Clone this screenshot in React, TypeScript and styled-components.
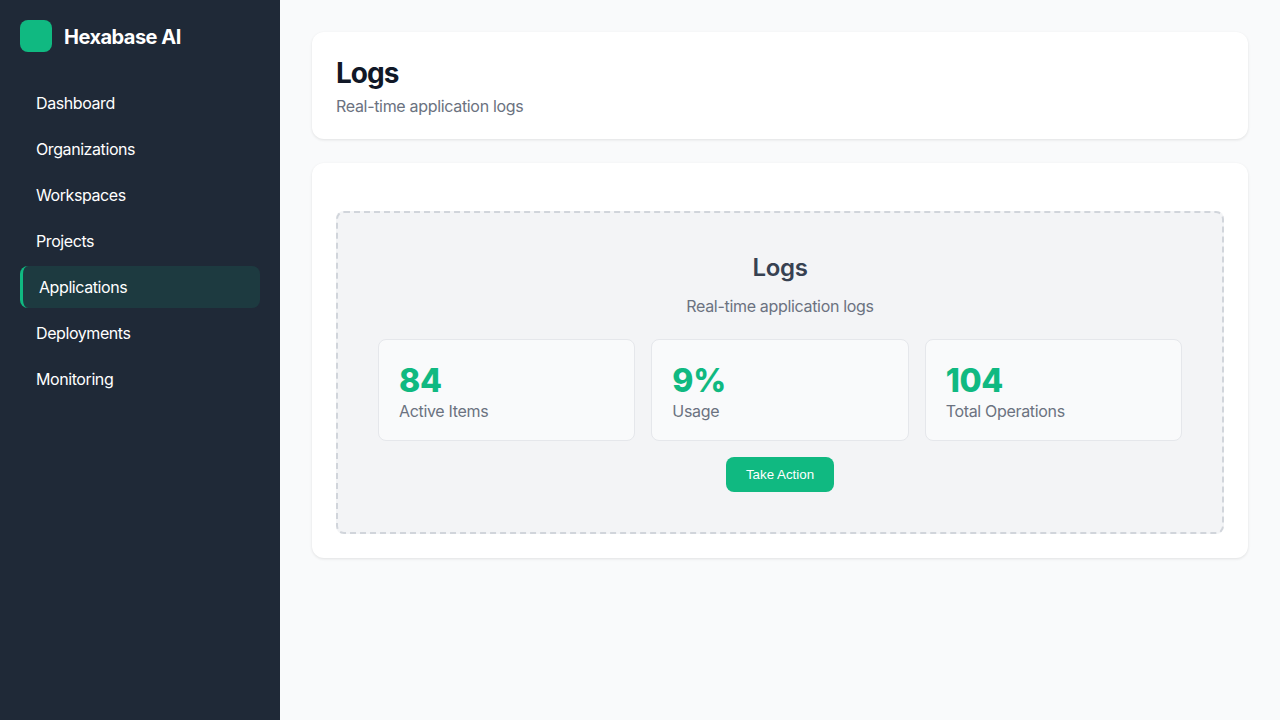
import React from 'react';
import styled, {createGlobalStyle} from 'styled-components';

const navItems = ['Dashboard', 'Organizations', 'Workspaces', 'Projects', 'Applications', 'Deployments', 'Monitoring'];

const stats = [
    {value: '84', label: 'Active Items'},
    {value: '9%', label: 'Usage'},
    {value: '104', label: 'Total Operations'},
];

const App = () => {
    return (
        <Layout>
            <GlobalStyle/>
            <Sidebar>
                <Brand>
                    <BrandMark/>
                    <BrandName>{'Hexabase AI'}</BrandName>
                </Brand>
                <Nav>
                    {navItems.map((item) => (
                        <NavItem
                            key={item}
                            $active={item === 'Applications'}
                        >
                            {item}
                        </NavItem>
                    ))}
                </Nav>
            </Sidebar>
            <Main>
                <Card>
                    <PageTitle>{'Logs'}</PageTitle>
                    <PageSubtitle>{'Real-time application logs'}</PageSubtitle>
                </Card>
                <ContentCard>
                    <Placeholder>
                        <PlaceholderTitle>{'Logs'}</PlaceholderTitle>
                        <PlaceholderText>{'Real-time application logs'}</PlaceholderText>
                        <StatGrid>
                            {stats.map((stat) => (
                                <StatCard key={stat.label}>
                                    <StatValue>{stat.value}</StatValue>
                                    <StatLabel>{stat.label}</StatLabel>
                                </StatCard>
                            ))}
                        </StatGrid>
                        <ActionButton>{'Take Action'}</ActionButton>
                    </Placeholder>
                </ContentCard>
            </Main>
        </Layout>
    );
};

const GlobalStyle = createGlobalStyle`
    * {
        box-sizing: border-box;
    }

    body {
        margin: 0;
        font-family: Inter, "Liberation Sans", sans-serif;
        letter-spacing: -0.02em;
        background: #f9fafb;
    }
`;

const Layout = styled.div`
    display: flex;
    height: 720px;
    overflow: hidden;
`;

const Sidebar = styled.aside`
    flex: 0 0 280px;
    padding: 20px;
    background: #1f2937;
    color: #fff;
`;

const Brand = styled.div`
    display: flex;
    align-items: center;
    gap: 12px;
    margin-bottom: 30px;
`;

const BrandMark = styled.div`
    width: 32px;
    height: 32px;
    border-radius: 8px;
    background: #10b981;
`;

const BrandName = styled.div`
    padding-top: 2px;
    font-size: 20px;
    font-weight: 700;
    letter-spacing: -0.026em;
`;

const Nav = styled.nav`
    display: flex;
    flex-direction: column;
    gap: 4px;
`;

const NavItem = styled.div<{$active: boolean}>`
    height: 42px;
    display: flex;
    align-items: center;
    padding: 0 16px;
    border-radius: 8px;
    font-size: 16px;
    font-weight: 420;
    letter-spacing: -0.026em;
    color: #fff;
    background: ${({$active}) => ($active ? 'rgba(16, 185, 129, 0.12)' : 'transparent')};
    border-left: ${({$active}) => ($active ? '3px solid #10b981' : '0')};
`;

const Main = styled.main`
    flex: 1;
    display: flex;
    flex-direction: column;
    gap: 24px;
    padding: 32px;
`;

const Card = styled.section`
    padding: 24px;
    border-radius: 12px;
    background: #fff;
    box-shadow: 0 1px 3px rgba(0, 0, 0, 0.1);
`;

const ContentCard = styled(Card)`
    padding-top: 48px;
`;

const PageTitle = styled.h1`
    margin: 0 0 8px;
    font-size: 28px;
    line-height: 34px;
    font-weight: 700;
    letter-spacing: -0.035em;
    color: #111827;
`;

const PageSubtitle = styled.p`
    margin: 0;
    font-size: 16px;
    line-height: 17px;
    color: #6b7280;
`;

const Placeholder = styled.div`
    display: flex;
    flex-direction: column;
    align-items: center;
    padding: 40px;
    border: 2px dashed #d1d5db;
    border-radius: 8px;
    background: #f3f4f6;
`;

const PlaceholderTitle = styled.h2`
    margin: 0 0 16px;
    font-size: 24px;
    line-height: 29px;
    font-weight: 600;
    color: #374151;
`;

const PlaceholderText = styled.p`
    margin: 0 0 24px;
    font-size: 16px;
    line-height: 17px;
    color: #6b7280;
`;

const StatGrid = styled.div`
    display: grid;
    grid-template-columns: repeat(3, 1fr);
    gap: 16px;
    width: 100%;
    margin-bottom: 16px;
`;

const StatCard = styled.div`
    padding: 20px;
    border: 1px solid #e5e7eb;
    border-radius: 8px;
    background: #f9fafb;
`;

const StatValue = styled.div`
    padding-top: 1px;
    margin-bottom: 3px;
    font-size: 32px;
    line-height: 39px;
    font-weight: 800;
    color: #10b981;
`;

const StatLabel = styled.div`
    font-size: 16px;
    line-height: 17px;
    color: #6b7280;
`;

const ActionButton = styled.button`
    padding: 10px 20px;
    border: 0;
    border-radius: 8px;
    background: #10b981;
    color: #fff;
    font-family: "Liberation Sans", sans-serif;
    font-size: 13.33px;
    letter-spacing: 0;
`;

export default App;
